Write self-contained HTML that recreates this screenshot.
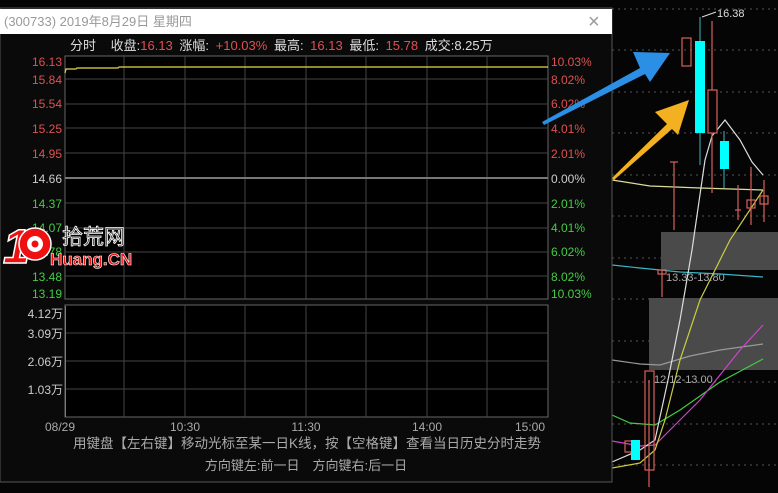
<!DOCTYPE html>
<html><head><meta charset="utf-8"><style>
html,body{margin:0;padding:0;background:#050505;width:778px;height:493px;overflow:hidden}
svg{display:block}
text{font-family:"Liberation Sans","Noto Sans CJK SC",sans-serif}
</style></head><body>
<svg width="778" height="493" viewBox="0 0 778 493" xmlns="http://www.w3.org/2000/svg">
<rect width="778" height="493" fill="#050505"/>
<g stroke="#555" stroke-width="1" stroke-dasharray="2,4">
<line x1="612" y1="9" x2="778" y2="9"/><line x1="612" y1="50" x2="778" y2="50"/><line x1="612" y1="92" x2="778" y2="92"/>
<line x1="612" y1="133" x2="778" y2="133"/><line x1="612" y1="175" x2="778" y2="175"/><line x1="612" y1="216" x2="778" y2="216"/>
<line x1="612" y1="258" x2="778" y2="258"/><line x1="612" y1="299" x2="778" y2="299"/><line x1="612" y1="341" x2="778" y2="341"/>
<line x1="612" y1="382" x2="778" y2="382"/><line x1="612" y1="424" x2="778" y2="424"/><line x1="612" y1="465" x2="778" y2="465"/>
</g>
<rect x="661" y="232" width="117" height="38" fill="#4a4a4a"/>
<rect x="649" y="298" width="129" height="72" fill="#4a4a4a"/>
<text x="666" y="281" fill="#aaa" font-size="11">13.33-13.80</text>
<text x="654" y="383" fill="#aaa" font-size="11">12.12-13.00</text>
<polyline points="612,265 640,268 680,272 720,274 763,277" fill="none" stroke="#3ab6c4" stroke-width="1.2"/>
<polyline points="612,360 640,364 660,365 690,356 720,350 763,344" fill="none" stroke="#999" stroke-width="1.2"/>
<polyline points="612,415 630,423 655,425 680,410 720,382 763,359" fill="none" stroke="#4c4" stroke-width="1.2"/>
<polyline points="612,441 640,446 655,445 675,425 700,400 740,350 763,325" fill="none" stroke="#c4c" stroke-width="1.2"/>
<polyline points="612,468 640,463 655,450 665,420 680,360 700,300 730,240 763,190" fill="none" stroke="#cc4" stroke-width="1.2"/>
<polyline points="612,180 650,186 700,188 763,190" fill="none" stroke="#dd9" stroke-width="1.2"/>
<polyline points="612,462 640,450 655,440 668,380 680,320 692,250 705,160 712,136 725,120 740,140 752,162 763,175" fill="none" stroke="#ddd" stroke-width="1.2"/>
<g stroke="#d9605a" fill="none" stroke-width="1.2">
<rect x="682" y="38" width="9" height="28"/>
<line x1="712" y1="21" x2="712" y2="193"/><rect x="708" y="90" width="9" height="43" fill="#050505"/>
<line x1="674" y1="162" x2="674" y2="230"/><line x1="670" y1="162" x2="678" y2="162"/>
<line x1="738" y1="185" x2="738" y2="220"/><line x1="735" y1="210" x2="741" y2="210"/>
<line x1="751" y1="167" x2="751" y2="225"/><rect x="747" y="200" width="8" height="8"/>
<line x1="764" y1="180" x2="764" y2="222"/><rect x="760" y="196" width="8" height="8"/>
<line x1="662" y1="270" x2="662" y2="297"/><rect x="658" y="270" width="8" height="4"/>
<line x1="649" y1="380" x2="649" y2="487"/><rect x="645" y="371" width="9" height="99"/>
<rect x="625" y="441" width="7" height="11"/>
</g>
<line x1="700" y1="17" x2="700" y2="165" stroke="#3ab6c4"/>
<rect x="695" y="41" width="10" height="92" fill="#0ff"/>
<line x1="724" y1="131" x2="724" y2="188" stroke="#3ab6c4"/>
<rect x="720" y="141" width="9" height="28" fill="#0ff"/>
<rect x="631" y="440" width="9" height="20" fill="#0ff"/>
<text x="717" y="17" fill="#ddd" font-size="11" font-family="Liberation Mono">16.38</text>
<line x1="702" y1="17" x2="716" y2="12" stroke="#ddd"/>
<!-- window -->
<rect x="0" y="8" width="612" height="474" fill="#0a0a0a" stroke="#555"/>
<rect x="0" y="9" width="612" height="25" fill="#fff"/>
<text x="4" y="26" fill="#999" font-size="13">(300733) 2019年8月29日 星期四</text>
<text x="588" y="28" fill="#999" font-size="20">×</text>
<text x="70" y="50" font-size="13" fill="#ddd" word-spacing="3">分时 <tspan dx="8">收盘:</tspan><tspan fill="#e05050">16.13</tspan> 涨幅: <tspan fill="#e05050">+10.03%</tspan> 最高: <tspan fill="#e05050">16.13</tspan> 最低: <tspan fill="#e05050">15.78</tspan> 成交:8.25万</text>
<g stroke="#444" stroke-width="1">
<rect x="65" y="56" width="483" height="243" fill="#000" stroke="#666"/>
<line x1="65" y1="79" x2="548" y2="79"/><line x1="65" y1="104" x2="548" y2="104"/><line x1="65" y1="128" x2="548" y2="128"/>
<line x1="65" y1="153" x2="548" y2="153"/><line x1="65" y1="203" x2="548" y2="203"/><line x1="65" y1="228" x2="548" y2="228"/>
<line x1="65" y1="252" x2="548" y2="252"/><line x1="65" y1="276" x2="548" y2="276"/>
<line x1="124" y1="56" x2="124" y2="299"/><line x1="185" y1="56" x2="185" y2="299"/><line x1="245" y1="56" x2="245" y2="299"/>
<line x1="306" y1="56" x2="306" y2="299"/><line x1="366" y1="56" x2="366" y2="299"/><line x1="427" y1="56" x2="427" y2="299"/><line x1="487" y1="56" x2="487" y2="299"/>
</g>
<line x1="65" y1="178" x2="548" y2="178" stroke="#777" stroke-width="2"/>
<polyline points="65,73 66,69 76,69 77,68 118,68 119,67 548,67" fill="none" stroke="#e6d84a" stroke-width="1.2"/>
<g font-size="12" text-anchor="end">
<text x="62" y="66" fill="#e05050">16.13</text><text x="62" y="84" fill="#e05050">15.84</text><text x="62" y="108" fill="#e05050">15.54</text>
<text x="62" y="133" fill="#e05050">15.25</text><text x="62" y="158" fill="#e05050">14.95</text><text x="62" y="183" fill="#ccc">14.66</text>
<text x="62" y="208" fill="#4c4">14.37</text><text x="62" y="232" fill="#4c4">14.07</text><text x="62" y="256" fill="#4c4">13.78</text>
<text x="62" y="281" fill="#4c4">13.48</text><text x="62" y="298" fill="#4c4">13.19</text>
</g>
<g font-size="12">
<text x="551" y="66" fill="#e05050">10.03%</text><text x="551" y="84" fill="#e05050">8.02%</text><text x="551" y="108" fill="#e05050">6.02%</text>
<text x="551" y="133" fill="#e05050">4.01%</text><text x="551" y="158" fill="#e05050">2.01%</text><text x="551" y="183" fill="#ccc">0.00%</text>
<text x="551" y="208" fill="#4c4">2.01%</text><text x="551" y="232" fill="#4c4">4.01%</text><text x="551" y="256" fill="#4c4">6.02%</text>
<text x="551" y="281" fill="#4c4">8.02%</text><text x="551" y="298" fill="#4c4">10.03%</text>
</g>
<g stroke="#444">
<rect x="65" y="305" width="483" height="112" fill="#000" stroke="#666"/>
<line x1="65" y1="333" x2="548" y2="333"/><line x1="65" y1="361" x2="548" y2="361"/><line x1="65" y1="389" x2="548" y2="389"/>
<line x1="124" y1="305" x2="124" y2="417"/><line x1="185" y1="305" x2="185" y2="417"/><line x1="245" y1="305" x2="245" y2="417"/>
<line x1="306" y1="305" x2="306" y2="417"/><line x1="366" y1="305" x2="366" y2="417"/><line x1="427" y1="305" x2="427" y2="417"/><line x1="487" y1="305" x2="487" y2="417"/>
</g>
<line x1="65.5" y1="306" x2="65.5" y2="417" stroke="#e05050"/>
<g font-size="12" fill="#ccc" text-anchor="end">
<text x="63" y="318">4.12万</text><text x="63" y="338">3.09万</text><text x="63" y="366">2.06万</text><text x="63" y="394">1.03万</text>
</g>
<g font-size="12" fill="#aaa" text-anchor="middle">
<text x="60" y="431">08/29</text><text x="185" y="431">10:30</text><text x="306" y="431">11:30</text><text x="427" y="431">14:00</text><text x="530" y="431">15:00</text>
</g>
<text x="307" y="448" fill="#aaa" font-size="13.5" text-anchor="middle">用键盘【左右键】移动光标至某一日K线，按【空格键】查看当日历史分时走势</text>
<text x="306" y="470" fill="#aaa" font-size="13" text-anchor="middle">方向键左:前一日　方向键右:后一日</text>
<!-- arrows -->
<polygon points="542,122 640,68 633,52 670,53 650,82 645,74 544,125" fill="#2b8fe6"/>
<polygon points="612,178 667,124 655,112 689,100 678,135 672,129 614,180" fill="#f3b020"/>
<!-- logo -->
<text x="3" y="263" fill="#e11" font-size="48" font-weight="bold" font-style="italic" stroke="#fff" stroke-width="1.5">1</text>
<circle cx="35" cy="244" r="16" fill="#e11" stroke="#fff" stroke-width="1.5"/>
<circle cx="35" cy="244" r="8" fill="#fff"/>
<circle cx="35" cy="244" r="3.5" fill="#e11"/>
<text x="62" y="244" fill="#222" font-size="21" stroke="#fff" stroke-width="0.8">拾荒网</text>
<text x="50" y="265" fill="#e11" font-size="17" font-weight="bold" stroke="#fff" stroke-width="0.6">Huang.CN</text>
</svg>
</body></html>
